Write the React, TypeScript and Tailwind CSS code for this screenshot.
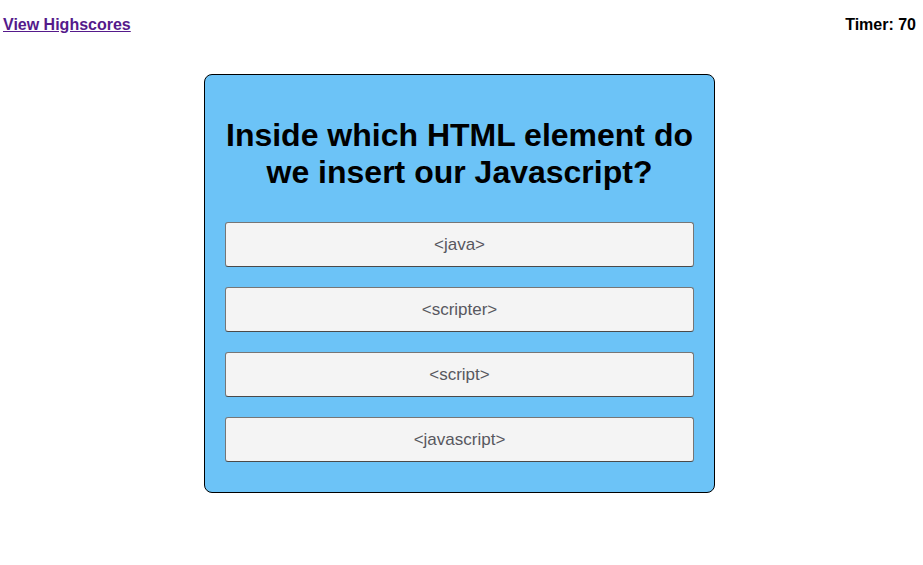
export default function App() {
  const choices = ["<java>", "<scripter>", "<script>", "<javascript>"];

  return (
    <div className="min-h-[565px] bg-white font-['Liberation_Sans',Arial,sans-serif] text-black">
      <header className="flex justify-between items-start pl-[3px] pr-[7px] pt-[13px] h-[50px]">
        <a href="#" className="text-base font-bold text-[#551a8b] underline">
          View Highscores
        </a>
        <span className="text-base font-bold">Timer: 70</span>
      </header>

      <div className="mt-[24px] ml-[204px] w-[511px] h-[419px] bg-[#6cc3f7] border border-black rounded-[8px] px-[20px] pt-[42px]">
        <h2 className="text-[32px] leading-[37px] font-bold text-center">
          Inside which HTML element do we insert our Javascript?
        </h2>
        <div className="flex flex-col gap-[20px] mt-[31px]">
          {choices.map((c) => (
            <button
              key={c}
              className="h-[45px] w-full pt-[1px] bg-[#f4f4f4] border border-[#767676] border-b-[#4a4a4a] rounded-[3px] text-[17px] text-[#58585f]"
            >
              {c}
            </button>
          ))}
        </div>
      </div>
    </div>
  );
}
